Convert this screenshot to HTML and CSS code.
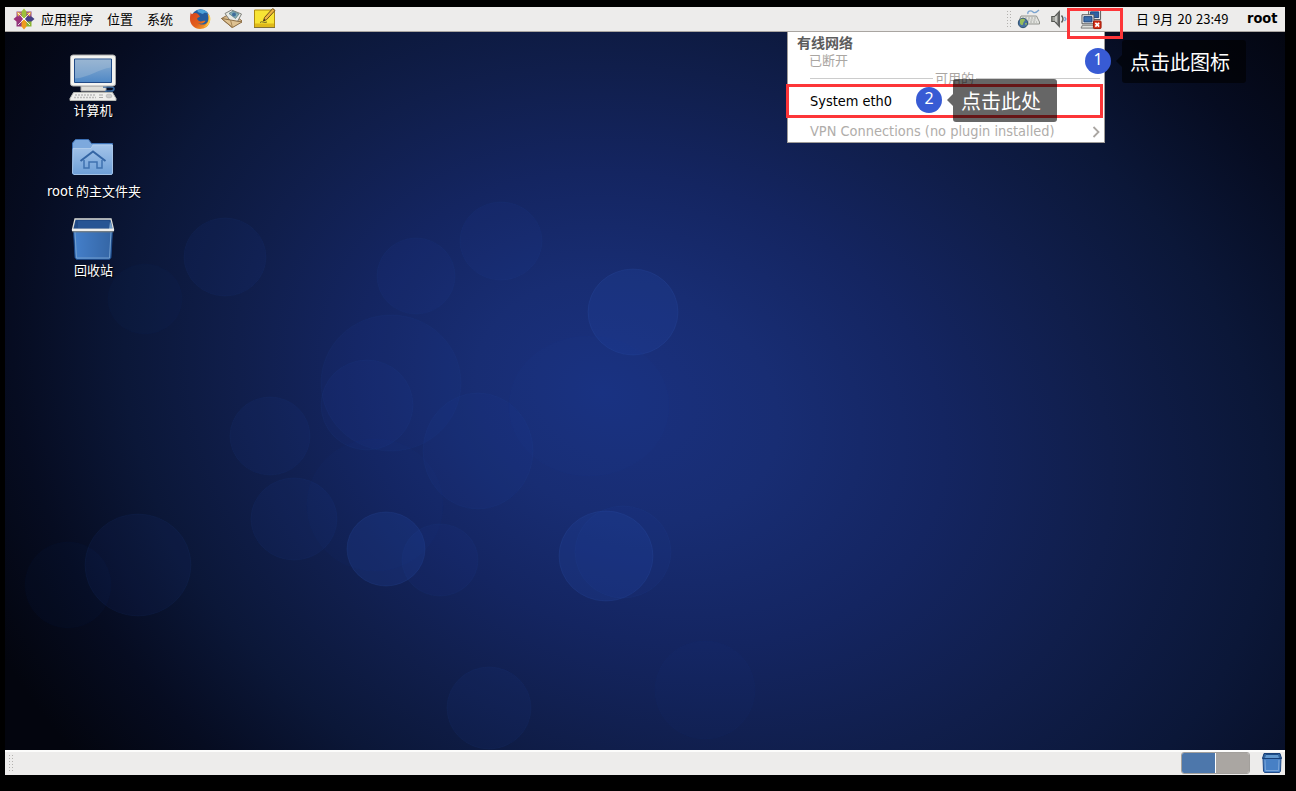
FILE: index.html
```html
<!DOCTYPE html>
<html lang="zh-CN">
<head>
<meta charset="utf-8">
<title>CentOS</title>
<link rel="stylesheet" href="styles.css">
</head>
<body>
<div class="screen">
  <header class="panel panel-top">
    <svg class="logo" width="22" height="22" viewBox="0 0 22 22">
      <path fill="#a14f8c" d="M3.500 3.500h5.500v5.500H3.500z"/><path fill="#8f3f86" d="M13 3.500h5.500V9H13z"/>
      <path fill="#93377c" d="M3.500 13H9v5.500H3.500z"/><path fill="#8bb432" d="M13 13h5.500v5.500H13z"/>
      <path fill="#9cc03c" d="M11 .5l2.500 3v5L11 10.500 8.500 8.500v-5z"/>
      <path fill="#9b3279" d="M.5 11l3-2.500h4.500l2 2.500-2 2.500H3.500z"/>
      <path fill="#454084" d="M21.500 11l-3-2.500H14L12 11l2 2.500h4.500z"/>
      <path fill="#ee9b20" d="M11 21.500l2.500-3v-5L11 11.500l-2.500 2v5z"/>
      <path d="M4 4l4.500 1L5 8.500zM18 4l-4.500 1L17 8.500z" fill="#eebc43"/>
      <path d="M5 5l12 12M17 5L5 17" stroke="#fff" stroke-width=".8"/>
    </svg>
    <nav class="menus"><span>应用程序</span><span>位置</span><span>系统</span></nav>
    <div class="launchers">
      <svg width="22" height="22" viewBox="0 0 22 22">
        <defs><linearGradient id="fox" x1="0" y1="0" x2="1" y2="1"><stop offset="0" stop-color="#d8421c"/><stop offset=".55" stop-color="#e2601b"/><stop offset="1" stop-color="#f8bf33"/></linearGradient></defs>
        <circle cx="11.500" cy="10.500" r="9.300" fill="#245d9d"/>
        <path d="M8 2.500c4-2 9-.5 11 3-2-1-4-1-5 .5-2-1-5-1-6-3.500z" fill="#4ba3d8"/>
        <path d="M2 4c0 1 .3 2 1 2.300C5 4.500 7 4.600 9 6l2 2.600c-1 .8-2.500 1-3 2.500 1 .8 1.500 2.600 4 2.300 2-.2 3-1 4.500-.5-2 3-6 3.500-8 1.500 3 3.500 9 2.500 10.500-1.500 1-3 .3-5.500-.5-7 2 2 3 4 2.500 7-.8 5-5 8-10 8C5.500 20.900.8 16.500 1 11c0-3 .3-5 1-7z" fill="url(#fox)"/>
        <path d="M18.500 5.500c2.500 5 1 11-4 13.500 3.500-.5 7-4 6.900-8.500 0-2-1.200-4-2.900-5z" fill="#fcd04b"/>
      </svg>
      <svg width="24" height="22" viewBox="0 0 24 22">
        <path d="M1.500 10.500L12 4.500l10 8.500-10 6.500z" fill="#d8b888" stroke="#8e7048"/>
        <path d="M5 5.500l6.500-3.500 10 4-4 7.500-6 1z" fill="#e8eae5" stroke="#80827c"/>
        <path d="M9 5.500l4-2.500 6 3-3.500 4.500z" fill="#84afb6" stroke="#52777e" stroke-width=".7"/>
        <circle cx="14" cy="6.500" r="2" fill="#3f6e9c"/>
        <path d="M1.500 10.500l9 1.500 11.500 2-9.500 5.500z" fill="#dfc292" stroke="#8e7048"/>
        <path d="M10.500 12l2 7.500" stroke="#a88655"/>
      </svg>
      <svg width="24" height="22" viewBox="0 0 24 22">
        <path d="M1.500 2h20v17h-20z" fill="#f8e435" stroke="#b08c10"/>
        <path d="M2 15.500h19V19H2z" fill="#dfb91a"/>
        <path d="M1 19.500h21" stroke="#827238"/>
        <path d="M7 14.500c2-2 4 1 7-.5" fill="none" stroke="#6f6421"/>
        <path d="M10.500 13l1-3.500 8.200-9 2.300 2-8.500 9.200z" fill="#edb341" stroke="#6e4d19"/>
        <path d="M10.500 13l.6-2 1.200 1.100z" fill="#222"/>
      </svg>
    </div>
    <div class="tray">
      <svg class="grip" width="6" height="18" viewBox="0 0 6 18"><path d="M1.500 1v17M4.500 1v17" stroke="#b4b2af" stroke-dasharray="1 2"/></svg>
      <svg class="keyboard" width="24" height="20" viewBox="0 0 24 20">
        <path d="M11 5c-1-3 3-4 5-2s4 0 6-2" fill="none" stroke="#7ba4cf" stroke-width="1.300"/>
        <path d="M4 7h15.500l3 6v2H1.500v-2z" fill="#e3e4e0" stroke="#92948f"/>
        <path d="M5 9h14M4.500 11h15M7 13h13" stroke="#aaaca8" stroke-dasharray="2 1"/>
        <circle cx="6" cy="14" r="4.700" fill="#4770a0" stroke="#305372"/>
        <path d="M3 11c2-2 5-1 5 0s-2 2-2 4-3 1-3-1zM8 14l2 0-1 3z" fill="#97bd5c"/>
      </svg>
      <svg class="sound" width="16" height="20" viewBox="0 0 16 20">
        <path d="M.8 7.500h3l4.500-5v15l-4.500-5h-3z" fill="#a3a59f" stroke="#555753" stroke-width="1.200"/>
        <path d="M5 7v6" stroke="#eee"/><path d="M7.500 4v12" stroke="#666" stroke-width="1.500"/>
        <path d="M10.500 6.500c1.700 2 1.700 5 0 7" fill="none" stroke="#555753" stroke-width="1.400"/>
        <path d="M13.500 8l1.500 2-1.500 2" fill="none" stroke="#7ba4d4" stroke-width="1.300"/>
      </svg>
      <svg class="network" width="24" height="22" viewBox="0 0 24 22">
        <path d="M8.500 1h12.500v10H8.500z" fill="#eee" stroke="#555"/><path d="M10.500 3h8.500v6h-8.500z" fill="#2e61a4" stroke="#1e4279"/>
        <path d="M1.500 6h12.500v9.500H1.500z" fill="#eee" stroke="#555"/><path d="M3.500 8h8.500v5.500H3.500z" fill="#396ead" stroke="#1e4279"/>
        <path d="M2 17h12l2 3H.5z" fill="#dedfdb" stroke="#777"/>
        <rect x="13.500" y="12.500" width="8" height="8" rx="1" fill="#d73119" stroke="#991200"/><path d="M15.500 14.500l4 4m0-4l-4 4" stroke="#fff" stroke-width="1.700"/>
      </svg>
    </div>
    <div class="clock">日 9月 20 23:49</div>
    <div class="user">root</div>
  </header>

  <main class="desktop">
    <svg class="wallpaper" width="1280" height="718" viewBox="5 32 1280 718">
      <defs>
        <radialGradient id="sky" gradientUnits="userSpaceOnUse" cx="0" cy="0" r="1" fx="-.17" fy="0" gradientTransform="translate(740 440) rotate(19) scale(860 650)">
          <stop offset="0" stop-color="#1a3180"/><stop offset=".18" stop-color="#182d73"/><stop offset=".35" stop-color="#142561"/><stop offset=".52" stop-color="#101e4b"/><stop offset=".68" stop-color="#0b1738"/><stop offset=".84" stop-color="#060c21"/><stop offset="1" stop-color="#03050e"/>
        </radialGradient>
      </defs>
      <path fill="url(#sky)" d="M5 32h1280v718H5z"/>
      <g class="bubbles">
        <ellipse cx="225" cy="257" rx="41" ry="39"/><ellipse class="faint" cx="145" cy="299" rx="37" ry="35"/>
        <ellipse cx="416" cy="276" rx="39" ry="38"/><ellipse cx="501" cy="241" rx="41" ry="39"/>
        <ellipse class="bright" cx="633" cy="312" rx="45" ry="43"/><ellipse cx="391" cy="383" rx="70" ry="68"/>
        <ellipse cx="367" cy="405" rx="46" ry="45"/><ellipse cx="270" cy="436" rx="40" ry="39"/>
        <ellipse cx="478" cy="451" rx="55" ry="58"/><ellipse cx="294" cy="519" rx="43" ry="41"/>
        <ellipse cx="138" cy="565" rx="53" ry="51"/><ellipse class="faint" cx="68" cy="585" rx="43" ry="43"/>
        <ellipse class="bright" cx="386" cy="549" rx="39" ry="37"/><ellipse cx="440" cy="560" rx="38" ry="36"/>
        <ellipse class="bright" cx="606" cy="556" rx="47" ry="45"/><ellipse cx="623" cy="552" rx="48" ry="46"/>
        <ellipse cx="489" cy="708" rx="42" ry="41"/><ellipse class="faint" cx="589" cy="406" rx="80" ry="70"/>
        <ellipse class="faint" cx="375" cy="505" rx="68" ry="66"/><ellipse class="faint" cx="705" cy="690" rx="50" ry="49"/>
      </g>
    </svg>
    <div class="icons">
      <div class="item computer">
        <svg width="48" height="48" viewBox="0 0 48 48">
          <defs><linearGradient id="lcd" x1="0" y1="0" x2="0" y2="1"><stop offset="0" stop-color="#8eafd0"/><stop offset="1" stop-color="#4f88c6"/></linearGradient></defs>
          <path d="M12 32h25v5H12z" fill="#deded9" stroke="#aaa"/>
          <path d="M34 33h8c5 0 3 4 0 4h-4c-3 0-1 4 3 3" fill="none" stroke="#36679e" stroke-width="1.600"/>
          <rect x="1.500" y="1" width="45" height="31" rx="2.500" fill="#f4f4f1" stroke="#aaa"/>
          <path d="M5.500 5h37v23.500h-37z" fill="url(#lcd)" stroke="#204a87"/>
          <path d="M6 5.500h36v8C29 15 22 23 6 24.500z" fill="#a9c0d7" opacity=".4"/>
          <path d="M4.500 38.500h39l3.500 6v2H1v-2z" fill="#eeeeec" stroke="#b5b7b2"/>
          <path d="M6 41h21M5 43.500h22" stroke="#bbb" stroke-width="1.500" stroke-dasharray="2 1"/>
          <path d="M30 41h4m-4 2.500h4" stroke="#aaa"/><ellipse cx="40" cy="42" rx="3" ry="2" fill="#ccc" stroke="#aaa" stroke-width=".5"/>
        </svg>
        <span>计算机</span>
      </div>
      <div class="item home">
        <svg width="48" height="48" viewBox="0 0 48 48">
          <defs><linearGradient id="fold" x1="0" y1="0" x2="0" y2="1"><stop offset="0" stop-color="#a4c4e9"/><stop offset="1" stop-color="#6e9fd7"/></linearGradient></defs>
          <path d="M3.500 15V9l3-3.500h13l3 4h21V39q0 1.500-1.500 1.500H5q-1.500 0-1.500-1.500z" fill="#7da9dd" stroke="#3c70b4"/>
          <path d="M4 14.500h18l2-3.500h19.500v28l-1 1.500H5L3.500 39z" fill="url(#fold)" stroke="#b6d0ed" stroke-width=".8"/>
          <path d="M11.500 27L24 17.500 36.500 27" fill="none" stroke="#3465a4" stroke-width="2"/>
          <path d="M15 26v8h5v-6h8v6h5v-8" fill="none" stroke="#3f71b0" stroke-width="1.500"/>
        </svg>
        <span><b>root</b> 的主文件夹</span>
      </div>
      <div class="item trash">
        <svg width="48" height="48" viewBox="0 0 48 48">
          <defs><linearGradient id="bin"><stop offset="0" stop-color="#4580cb"/><stop offset="1" stop-color="#3465a4"/></linearGradient></defs>
          <path d="M4.500 16h39L42 43.500l-1.500 2h-33L6 43.500z" fill="url(#bin)" stroke="#1b4785"/>
          <path d="M6 18l1.500 26h33L42 18" fill="none" stroke="#729fcf"/>
          <path d="M6 5.500h36l2.500 10h-41z" fill="#204a87"/><path d="M9 14V7h31v7z" fill="#285594"/>
          <path d="M41 7l3 8h-4z" fill="#739fcd"/>
          <path d="M6 5h36l2.500 10.500H3.500z" fill="none" stroke="#dedfda" stroke-width="1.300"/>
          <path d="M3 16h42" stroke="#eeeeec" stroke-width="2.500"/><path d="M3.500 17.800h41" stroke="#77776f"/>
        </svg>
        <span>回收站</span>
      </div>
    </div>
  </main>

  <footer class="panel panel-bottom">
    <svg class="grip" width="6" height="18" viewBox="0 0 6 18"><path d="M1.500 1v17M4.500 1v17" stroke="#b4b2af" stroke-dasharray="1 2"/></svg>
    <div class="workspaces"><i class="active"></i><i></i></div>
    <svg class="mini-trash" width="22" height="22" viewBox="0 0 22 22">
      <path d="M2 5.500h18l-.5 13.500-1 1.500h-15l-1-1.500z" fill="#4780c5" stroke="#204a87"/>
      <path d="M4 8l.5 10.500h13L18 8" fill="none" stroke="#7ba5d8"/>
      <path d="M3 1.500h16l1.500 5H1.500z" fill="#32659f" stroke="#173f78"/><path d="M5 3h12l1 3H4z" fill="#6298ce"/><path d="M5 2.500h12" stroke="#1d4c85"/>
    </svg>
  </footer>

  <section class="netmenu">
    <div class="title">有线网络</div>
    <div class="status">已断开</div>
    <div class="divider"><span>可用的</span></div>
    <div class="entry"><span>System eth0</span></div>
    <div class="entry disabled"><span>VPN Connections (no plugin installed)</span>
      <svg width="9" height="12" viewBox="0 0 9 12"><path d="M2.500 1l5 5-5 5" fill="none" stroke="#aaa6a2" stroke-width="1.800"/></svg></div>
  </section>

  <div class="mark mark-tray"></div>
  <div class="mark mark-entry"></div>
  <div class="badge badge-one">1</div>
  <div class="badge badge-two">2</div>
  <div class="tip tip-one">点击此图标</div>
  <div class="tip tip-two">点击此处</div>
</div>
</body>
</html>
```
FILE: styles.css
```css
* { box-sizing: border-box; }
body { margin: 0; background: #000; padding: 7px 0 0 5px; height: 791px; overflow: hidden;
  font: 13px/16px "Noto Sans CJK SC", sans-serif; white-space: nowrap; }
svg { display: block; flex: none; }
.screen { position: relative; width: 1280px; height: 768px; display: flex; flex-direction: column; }
.panel { display: flex; align-items: center; height: 25px; flex: none; background: #edeceb; color: #000; }
.panel-top { border-bottom: 1px solid #a9a5a1; padding: 0 7px 0 8px; }
.menus { display: flex; gap: 14px; margin-left: 6px; }
.launchers { display: flex; gap: 9px; margin-left: 16px; }
.tray { display: flex; align-items: center; margin-left: auto; height: 24px; }
.keyboard { margin-left: 5px; }
.sound { margin-left: 10px; }
.network { margin-left: 13px; padding-top: 1px; }
.clock { width: 93px; margin-left: 32px; word-spacing: 1.200px; }
.user { width: 31px; margin-left: 18px; padding-bottom: 3px; font: bold 14.400px/16px "DejaVu Sans Condensed", "DejaVu Sans", sans-serif; }
.desktop { position: relative; flex: 1; }
.wallpaper { position: absolute; inset: 0; }
.bubbles { fill: #2548a8; fill-opacity: .09; stroke: #3a61c0; stroke-opacity: .06; }
.bright { fill-opacity: .22; stroke-opacity: .14; }
.faint { fill-opacity: .04; stroke-opacity: .02; }
.icons { position: relative; width: 178px; padding-top: 22px; display: flex; flex-direction: column; }
.item { display: flex; flex-direction: column; align-items: center; color: #fff; text-shadow: 1px 1px 1px #000; }
.computer { height: 80px; padding-right: 2px; }
.home { height: 80px; }
.home span { padding-top: 1px; }
.home b { font: 14.400px/16px "DejaVu Sans Condensed", "DejaVu Sans", sans-serif; }
.home svg, .trash svg { margin-right: 2px; }
.trash span { margin-right: 1px; }
.panel-bottom { border-top: 2px solid #fcfcfb; padding: 0 2px 2px 3px; }
.workspaces { display: flex; gap: 1px; width: 69px; height: 22px; margin-left: auto; border: 1px solid #a3a09c; border-radius: 3px; background: #fff; overflow: hidden; }
.workspaces i { flex: 1; background: #aaa6a2; }
.workspaces .active { background: #4d77ab; }
.mini-trash { margin-left: 11px; }
.netmenu { position: absolute; left: 782px; top: 25px; width: 318px; height: 111px; background: #fff; border: 1px solid #9e9b98; border-top: 0; padding-top: 2px; }
.title { padding-left: 9px; height: 18px; font: bold 14px/17px "Noto Sans CJK SC", sans-serif; color: #5c5c5c; }
.status { padding-left: 21px; height: 18px; line-height: 16px; color: #aaa6a2; }
.divider { display: flex; align-items: center; gap: 2px; height: 16px; margin: 0 4px 1px 22px; color: #aaa6a2; }
.divider::before, .divider::after { content: ""; flex: 1; height: 1px; background: #ccc; }
.divider::before { flex: none; width: 123px; }
.entry { display: flex; align-items: center; justify-content: space-between; height: 30px; padding: 0 4px 0 22px; font: 14.430px/16px "DejaVu Sans Condensed", "DejaVu Sans", sans-serif; }
.entry span { padding-bottom: 2px; }
.disabled { color: #b0adaa; }
.mark { position: absolute; border: 3px solid #fd3538; }
.mark-tray { left: 1062px; top: 1px; width: 56px; height: 31px; }
.mark-entry { left: 781px; top: 77px; width: 317px; height: 34px; }
.badge { position: absolute; width: 26px; height: 26px; border-radius: 50%; background: #385bd4; color: #fff; text-align: center; font: 16px/23px "Noto Sans", sans-serif; }
.badge-one { left: 1080px; top: 41px; }
.badge-two { left: 911px; top: 80px; }
.tip { position: absolute; height: 43px; padding-left: 8px; border-radius: 3px; background: rgba(0,0,0,.6); color: #fff; font: 20px/43px "Noto Sans CJK SC", sans-serif; }
.tip::before { content: ""; position: absolute; left: -6px; top: 15px; border: 6px solid transparent; border-left: 0; border-right-color: rgba(0,0,0,.6); }
.tip-one { left: 1117px; top: 33px; width: 124px; }
.tip-two { left: 948px; top: 72px; width: 104px; }
```
